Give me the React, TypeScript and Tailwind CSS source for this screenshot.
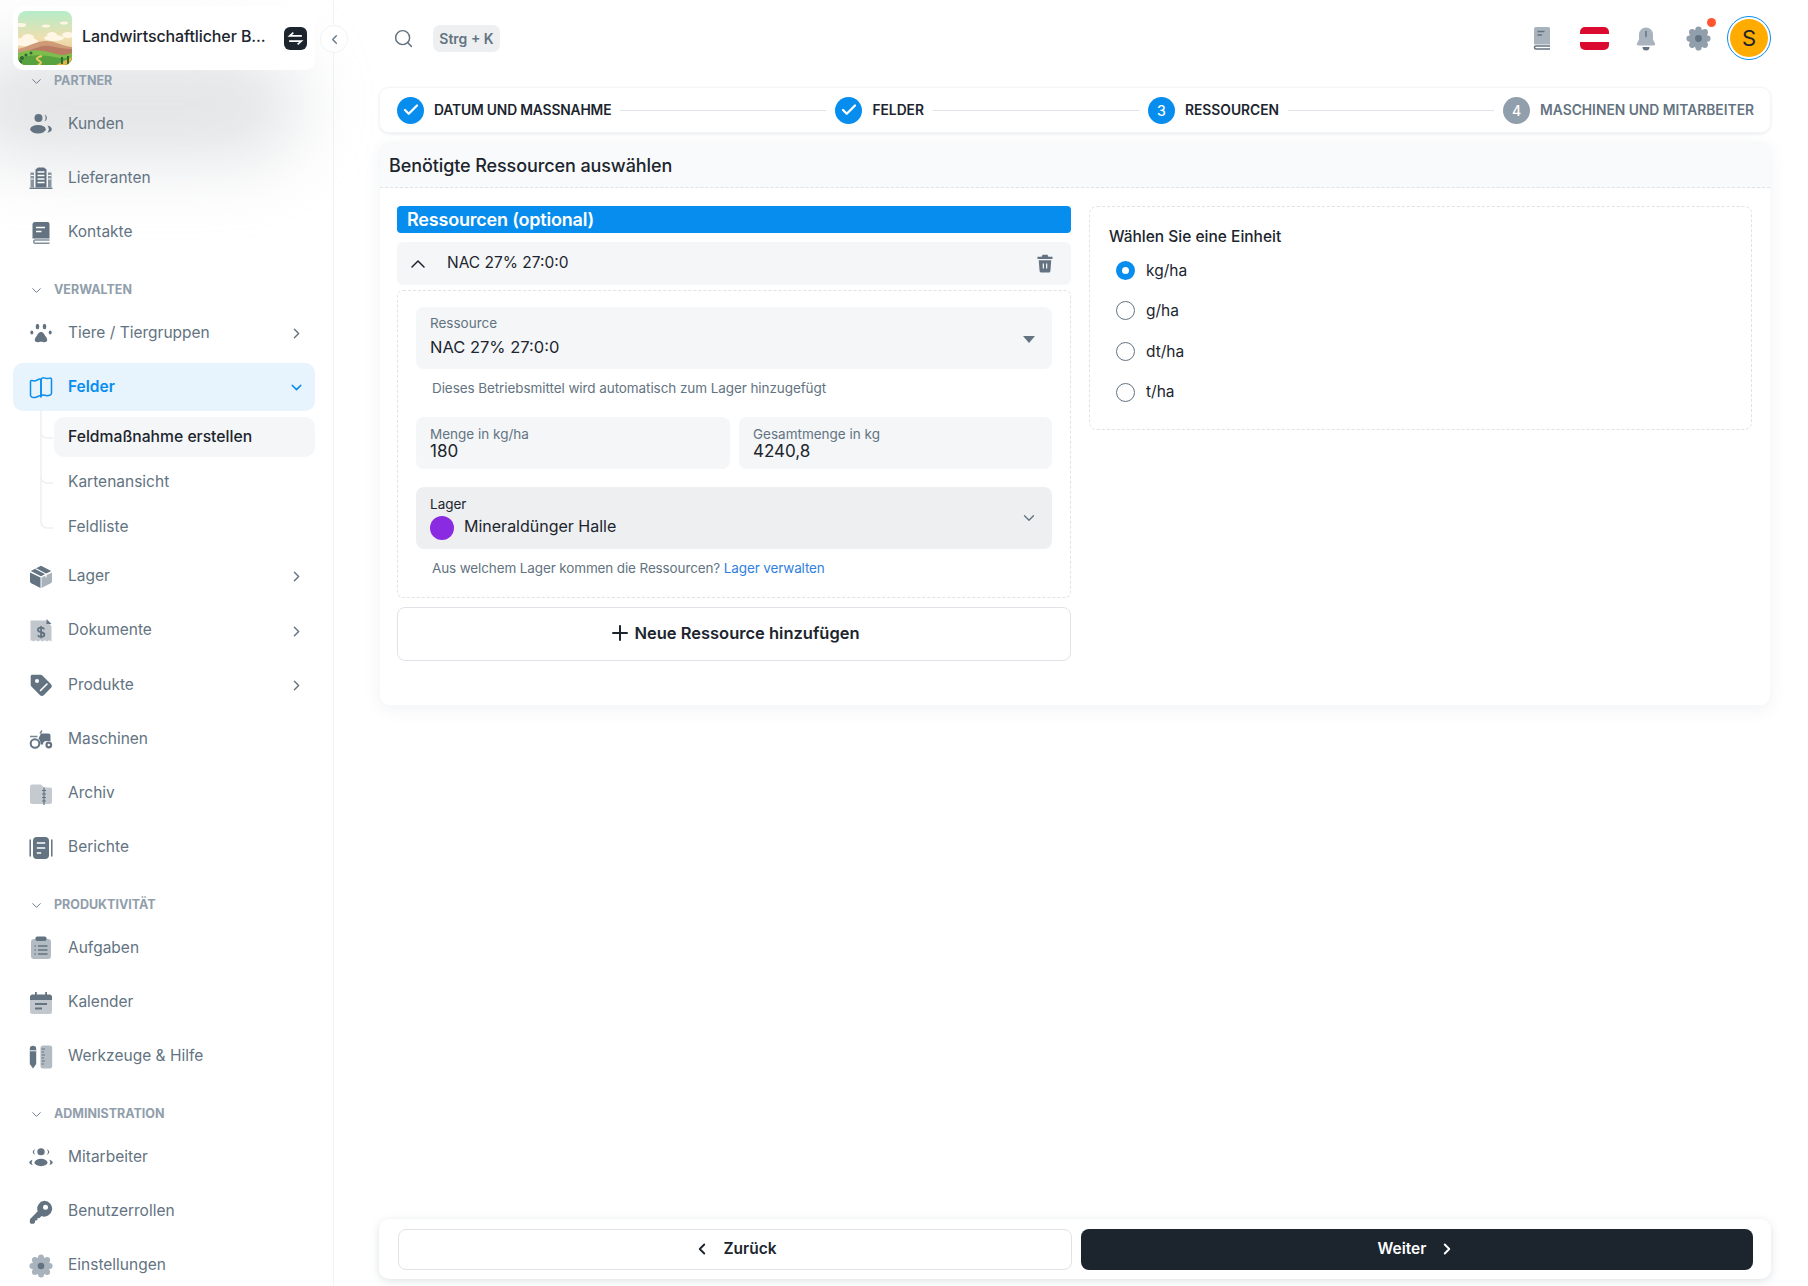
import React from "react";
import { ChevronDown, ChevronRight, ChevronLeft, ChevronUp, Search, Plus, Check } from "lucide-react";

const S = ({ children, className = "w-6 h-6" }: { children: React.ReactNode; className?: string }) => (
  <svg viewBox="0 0 24 24" fill="currentColor" className={className}>{children}</svg>
);

const Users = () => (
  <S>
    <circle cx="9.5" cy="6" r="4" />
    <path d="M15.5 2.6a3.6 3.6 0 0 1 0 6.8 6 6 0 0 0 0-6.8z" />
    <ellipse cx="9" cy="17.2" rx="7.8" ry="4.2" />
    <path d="M18.2 13.6c2.6.5 4.6 1.9 4.6 3.6s-2 3.1-4.6 3.6c1-1 1.6-2.2 1.6-3.6s-.6-2.6-1.6-3.6z" />
  </S>
);
const Building = () => (
  <S>
    <path d="M1.500 6.500h3.500v15H1.500zM19 6.500h3.500v15H19z" opacity="0.75" />
    <path d="M6.500 3.500 9 1.500h6l2.500 2V21.500h-11z" />
    <path d="M8.500 6h7M8.500 9.500h7M8.500 13h7M8.500 16.500h7" stroke="#fff" strokeWidth="1.400" />
    <path d="M.5 22.300h23" stroke="currentColor" strokeWidth="1.300" />
    <path d="M1.800 9.500h3M1.800 13h3M19.200 9.500h3M19.200 13h3" stroke="#fff" strokeWidth="1.100" />
  </S>
);
const BookIcon = () => (
  <S>
    <path d="M3.500 3.500A2.500 2.500 0 0 1 6 1h12.500A2 2 0 0 1 20.500 3v14.500H3.500z" />
    <path d="M7 6.500h9M7 10.500h5.500" stroke="#fff" strokeWidth="1.600" />
    <path d="M20.500 19H6a1.700 1.700 0 0 0 0 3.300h14.500" fill="none" stroke="currentColor" strokeWidth="1.500" opacity="0.8" />
  </S>
);
const Paw = () => (
  <S>
    <path d="M12 11c-2.500 0-3.200 2.400-4.500 4.200-1 1.400-2.200 3-1.600 4.600.6 1.500 2.600 1.600 4.100 1.200 1.300-.3 2.700-.3 4 0 1.500.4 3.500.3 4.100-1.200.6-1.600-.6-3.200-1.600-4.600C15.200 13.400 14.500 11 12 11z" />
    <ellipse cx="8.500" cy="5.500" rx="1.800" ry="2.800" />
    <ellipse cx="15.500" cy="5.500" rx="1.800" ry="2.800" />
    <ellipse cx="2.800" cy="11.500" rx="1.500" ry="2" />
    <ellipse cx="21.200" cy="11.500" rx="1.500" ry="2" />
  </S>
);
const MapI = () => (
  <S>
    <path d="M1.500 6.800c0-1 .8-1.600 1.700-1.300 2 .6 3.700.7 5.400-.6 1.100-.8 2.300-1.500 3.400-.5v16.700c-1.100-1-2.300-.3-3.400.5-1.700 1.300-3.400 1.200-5.400.6-.9-.3-1.700-.9-1.700-1.900z" fill="none" stroke="currentColor" strokeWidth="1.500" />
    <path d="M22.500 4.400c0-1-.8-1.600-1.700-1.300-1.800.6-3.400.6-5 0-1.300-.5-2.700-.5-3.800 1.300v16.700c1.100-1.300 2.500-1.400 3.800-.9 1.600.6 3.200.6 5 0 .9-.3 1.700-.9 1.700-1.900z" fill="none" stroke="currentColor" strokeWidth="1.500" />
  </S>
);
const BoxI = () => (
  <S>
    <path d="M1 7.500 11.500 12.500V23L2.300 18.300A2.400 2.400 0 0 1 1 16.200z" />
    <path d="M23 7.500 12.500 12.500V23l9.200-4.700a2.400 2.400 0 0 0 1.300-2.100z" opacity="0.55" />
    <path d="M12 .8 1.800 6 12 11.200 22.200 6z" />
    <path d="M6.500 3.500 17 9v3.500" fill="none" stroke="#fff" strokeWidth="1.100" />
  </S>
);
const Bill = () => (
  <S>
    <path d="M1.500 1.500H17l5.500 5.500v15.500l-2.300-1.300-2.200 1.300-2.200-1.300-2.300 1.300-2.200-1.300-2.300 1.300-2.200-1.300-2.200 1.300-2.100-1.300-1 .8z" opacity="0.4" />
    <path d="M17.500 0 22.500 5H17.500z" />
    <path d="M15.300 10.300c-.5-1-1.700-1.600-3.200-1.600-1.800 0-3.200.9-3.200 2.300 0 3 6.500 1.500 6.500 4.500 0 1.400-1.400 2.300-3.300 2.300-1.500 0-2.700-.6-3.200-1.700M12.100 7v12.200" fill="none" stroke="currentColor" strokeWidth="1.800" />
  </S>
);
const Tag = () => (
  <S>
    <path d="M2.700 1.800h8.800a3 3 0 0 1 2.100.9l8.200 8.200a3 3 0 0 1 0 4.200l-6.800 6.800a3 3 0 0 1-4.200 0l-8.200-8.200a3 3 0 0 1-.9-2.100V3.500a1.700 1.700 0 0 1 1-1.700z" />
    <circle cx="8" cy="8" r="2" fill="#fff" />
    <path d="M11.500 17.500 18 11" stroke="#fff" strokeWidth="1.600" strokeLinecap="round" />
  </S>
);
const Tractor = () => (
  <S>
    <circle cx="6" cy="16.500" r="4.300" fill="none" stroke="currentColor" strokeWidth="2" />
    <circle cx="19.800" cy="18" r="2.300" fill="none" stroke="currentColor" strokeWidth="2.200" />
    <path d="M12 6.500h7.500a2 2 0 0 1 2 2V14h-4a3.500 3.500 0 0 0-3.500 3.500h-2.500c.2-2.500-.5-4.500-2-6z" />
    <path d="M1 9.500h7.500M11 6.500l2-3" stroke="currentColor" strokeWidth="1.500" fill="none" opacity="0.85" />
  </S>
);
const Folder = () => (
  <S>
    <path d="M1 4.500A2 2 0 0 1 3 2.500h9l3 3h6.500a1.500 1.500 0 0 1 1.500 1.500v13a2 2 0 0 1-2 2H3a2 2 0 0 1-2-2z" opacity="0.38" />
    <path d="M15 5.500V23" stroke="currentColor" strokeWidth="1.200" />
    <path d="M13 8.500h4M13 12h4M13 15.500h4M13 19h4" stroke="currentColor" strokeWidth="1.200" />
  </S>
);
const Report = () => (
  <S>
    <rect x="4" y="1" width="16" height="22" rx="4" />
    <path d="M7.800 7h8.400M7.800 12h8.400M7.800 17h4.400" stroke="#fff" strokeWidth="1.700" />
    <path d="M1.200 4v16M22.800 4v16" stroke="currentColor" strokeWidth="1.500" strokeLinecap="round" />
  </S>
);
const Clip = () => (
  <S>
    <rect x="2" y="3" width="20" height="20" rx="3" opacity="0.48" />
    <rect x="6.500" y=".5" width="11" height="4.500" rx="1.700" />
    <path d="M5.500 10h1.200M5.500 14h1.200M5.500 18h1.200M9 10h9.500M9 14h9.500M9 18h9.500" stroke="currentColor" strokeWidth="1.500" />
  </S>
);
const Cal = () => (
  <S>
    <path d="M1 9h22v11.500a2.500 2.500 0 0 1-2.500 2.500h-17A2.500 2.500 0 0 1 1 20.500z" opacity="0.4" />
    <path d="M1 6a2.500 2.500 0 0 1 2.500-2.500H6V1h1.800v2.500h8.400V1H18v2.500h2.500A2.500 2.500 0 0 1 23 6v3H1z" />
    <path d="M6 13h12M6 17.500h7" stroke="currentColor" strokeWidth="1.900" />
  </S>
);
const Tools = () => (
  <S>
    <path d="M.8 4a3.200 3.200 0 0 1 6.400 0v15L4 23.500.8 19z" />
    <path d="M.8 5.800h6.400" stroke="#fff" strokeWidth=".9" />
    <rect x="11.500" y=".5" width="11.700" height="23" rx="2.500" opacity="0.48" />
    <path d="M12.500 4h3.500M12.500 7h2.500M12.500 10h3.500M12.500 13h2.500M12.500 16h3.500M12.500 19h2.500" stroke="currentColor" strokeWidth="1.100" />
  </S>
);
const Group = () => (
  <S>
    <ellipse cx="12" cy="5.800" rx="3.700" ry="3.500" />
    <ellipse cx="12" cy="16.500" rx="6.500" ry="3.700" />
    <path d="M6.300 3.300C4.500 3.800 3.800 5 3.800 6s.7 2.200 2.500 2.700C5.500 7.800 5 7 5 6s.5-1.800 1.300-2.700zM17.700 3.300c1.800.5 2.500 1.700 2.500 2.700s-.7 2.200-2.500 2.700c.8-.9 1.300-1.700 1.300-2.700s-.5-1.800-1.300-2.700zM3.700 13.800C1.500 14.500.3 15.500.3 16.500s1.200 2 3.400 2.700c-.7-.9-1-1.800-1-2.700s.3-1.800 1-2.700zM20.300 13.800c2.200.7 3.400 1.700 3.400 2.700s-1.200 2-3.400 2.700c.7-.9 1-1.800 1-2.700s-.3-1.800-1-2.700z" />
  </S>
);
const Key = () => (
  <S>
    <path d="M15.300.8a7.900 7.900 0 1 1-2.800 15.300l-2.200 2.200-1.700-.3-.3 2.300-2.200.3-.2 1.900a1.500 1.500 0 0 1-1.400 1.200H2.200A1.500 1.500 0 0 1 .8 22.200l.1-2.300c0-.5.2-.8.5-1.100l7.300-7.500A7.900 7.900 0 0 1 15.300.8z" />
    <circle cx="16.500" cy="7.200" r="2.500" fill="#fff" />
  </S>
);
const Gear = ({ c = "#a9b3bd", d = "#637381", className = "w-6 h-6" }: { c?: string; d?: string; className?: string }) => (
  <svg viewBox="0 0 24 24" className={className}>
    <g fill={c}>
      <circle cx="12" cy="12" r="9" />
      <circle cx="12" cy="3.400" r="3" />
      <circle cx="12" cy="20.600" r="3" />
      <circle cx="3.400" cy="12" r="3" />
      <circle cx="20.600" cy="12" r="3" />
      <circle cx="5.900" cy="5.900" r="3" />
      <circle cx="18.100" cy="5.900" r="3" />
      <circle cx="5.900" cy="18.100" r="3" />
      <circle cx="18.100" cy="18.100" r="3" />
    </g>
    <circle cx="12" cy="12" r="3.300" fill={d} />
  </svg>
);

const Row = ({ icon, label, arrow }: { icon: React.ReactNode; label: string; arrow?: boolean }) => (
  <div className="h-[48px] flex items-center pl-[29px] pr-[28px] text-[#637381] text-[15.500px] font-normal">
    <span className="w-[24px] h-[24px] shrink-0">{icon}</span>
    <span className="ml-[15px] mt-[-2px] flex-1">{label}</span>
    {arrow && <ChevronRight className="w-[17px] h-[17px]" strokeWidth={2} />}
  </div>
);

const Group2 = ({ label, children }: { label: string; children: React.ReactNode }) => (
  <div className="flex flex-col gap-[6.200px]">
    <div className="h-[26px] flex items-center pl-[28.500px] text-[12.500px] font-bold text-[#919eab] leading-none">
      <ChevronDown className="w-[15px] h-[15px] text-[#637381]" strokeWidth={1.500} />
      <span className="ml-[10.500px]">{label}</span>
    </div>
    {children}
  </div>
);

const Logo = () => (
  <svg viewBox="0 0 54 54" className="w-[54px] h-[54px] rounded-[8px]">
    <defs>
      <linearGradient id="sky" x1="0" y1="0" x2="0" y2="1">
        <stop offset="0" stopColor="#b4ecc8" />
        <stop offset="0.5" stopColor="#eedfb0" />
        <stop offset="1" stopColor="#f0bd90" />
      </linearGradient>
    </defs>
    <rect width="54" height="54" fill="url(#sky)" />
    <g fill="#fff6e6">
      <ellipse cx="8" cy="31" rx="12" ry="4.500" />
      <ellipse cx="10" cy="27" rx="6" ry="4" />
      <ellipse cx="36" cy="27" rx="10" ry="3" />
      <ellipse cx="34" cy="24" rx="5" ry="3" />
      <ellipse cx="50" cy="24" rx="6" ry="3" />
      <ellipse cx="3" cy="14" rx="5" ry="2" />
      <ellipse cx="28" cy="15" rx="4" ry="1.500" />
      <ellipse cx="46" cy="12" rx="4" ry="1.500" />
    </g>
    <path d="M0 38C10 36 18 30 28 30S44 35 54 36V54H0z" fill="#cf9a78" />
    <path d="M10 40C20 36 26 34 32 35S46 38 54 38V50H10z" fill="#b97c62" />
    <path d="M0 42C12 38 24 39 34 42S48 44 54 42V54H0z" fill="#7dbd4c" />
    <path d="M0 47C14 43 26 44 36 46S50 47 54 46V54H0z" fill="#57a23e" />
    <path d="M20 54C30 50 10 49 24 45" stroke="#ecc95e" strokeWidth="2" fill="none" />
    <path d="M38 54 54 46V54z" fill="#e3b548" />
    <g fill="#2f6a36">
      <circle cx="4" cy="47" r="2" />
      <circle cx="8" cy="44" r="1.600" />
      <circle cx="13" cy="42" r="1.500" />
      <circle cx="2" cy="51" r="2" />
      <rect x="43" y="46" width="2" height="7" />
      <rect x="49" y="45" width="2" height="8" />
    </g>
  </svg>
);

const Field = ({ label, value, className = "" }: { label: string; value: string; className?: string }) => (
  <div className={`h-[52px] rounded-[8px] bg-[#f4f6f8] px-[14px] pt-[8px] ${className}`}>
    <div className="text-[13.500px] leading-[18px] text-[#637381]">{label}</div>
    <div className="text-[17px] leading-[17px] text-[#1c252e]">{value}</div>
  </div>
);

const Radio = ({ label, on }: { label: string; on?: boolean }) => (
  <div className="h-[40.600px] flex items-center pl-[7px] text-[15.500px] text-[#1c252e]">
    {on ? (
      <span className="w-[19px] h-[19px] rounded-full border-[6px] border-[#078dee] bg-white" />
    ) : (
      <span className="w-[19px] h-[19px] rounded-full border-[1.500px] border-[#637381] bg-white" />
    )}
    <span className="ml-[11px]">{label}</span>
  </div>
);

const Step = ({ n, label, state, tight }: { n: number; label: string; state: "done" | "active" | "todo"; tight?: boolean }) => (
  <div className="flex items-center shrink-0">
    <span
      className={`w-[27px] h-[27px] rounded-full flex items-center justify-center text-white text-[14px] font-medium ${
        state === "todo" ? "bg-[#919eab]" : "bg-[#078dee]"
      }`}
    >
      {state === "done" ? <Check className="w-[18px] h-[18px]" strokeWidth={3} /> : n}
    </span>
    <span
      className={`ml-[10px] text-[13.800px] font-semibold ${tight ? "tracking-[-0.15px]" : ""} ${
        state === "todo" ? "text-[#637381]" : "text-[#1c252e]"
      }`}
    >
      {label}
    </span>
  </div>
);
const Line = () => <div className="flex-1 h-px bg-[#dfe3e8] mx-[9px]" />;

export default function App() {
  return (
    <div className="w-[1808px] h-[1286px] flex bg-white overflow-hidden font-['Inter','Liberation_Sans',sans-serif] text-[#1c252e]">
      {/* Sidebar */}
      <aside className="relative w-[334px] h-[1286px] shrink-0 border-r border-[#f1f3f5] bg-white">
        <div className="absolute left-[-40px] top-[50px] w-[340px] h-[110px] rounded-full bg-[#c4c8cc] blur-[36px] opacity-50" />
        <div className="relative h-[1286px] overflow-hidden pt-[68px] flex flex-col gap-[20.500px]">
          <Group2 label="PARTNER">
            <Row icon={<Users />} label="Kunden" />
            <Row icon={<Building />} label="Lieferanten" />
            <Row icon={<BookIcon />} label="Kontakte" />
          </Group2>
          <Group2 label="VERWALTEN">
            <Row icon={<Paw />} label="Tiere / Tiergruppen" arrow />
            <div className="ml-[13px] mr-[18px]">
              <div className="h-[48px] flex items-center pl-[16px] pr-[10.500px] rounded-[10px] bg-[#e7f3fd] text-[#078dee] text-[15.500px] font-semibold">
                <span className="w-[24px] h-[24px] shrink-0"><MapI /></span>
                <span className="ml-[15px] mt-[-2px] flex-1">Felder</span>
                <ChevronDown className="w-[17px] h-[17px]" strokeWidth={2} />
              </div>
            </div>
            <div className="relative -mt-[1px] ml-[54px] mr-[18px] flex flex-col gap-[5px]">
              <svg className="absolute left-[-15px] top-[-7px] w-[16px] h-[130px]" viewBox="0 0 16 130" fill="none">
                <path d="M2 0V112a6 6 0 0 0 6 6h6M2 22a6 6 0 0 0 6 6h6M2 67a6 6 0 0 0 6 6h6" stroke="#edeff1" strokeWidth="1.500" />
              </svg>
              <div className="h-[40px] pl-[14px] flex items-center rounded-[10px] bg-[#f4f6f8] text-[15.700px] font-medium text-[#1c252e]">Feldmaßnahme erstellen</div>
              <div className="h-[40px] pl-[14px] flex items-center text-[15.500px] text-[#637381]">Kartenansicht</div>
              <div className="h-[40px] pl-[14px] flex items-center text-[15.500px] text-[#637381]">Feldliste</div>
            </div>
            <Row icon={<BoxI />} label="Lager" arrow />
            <Row icon={<Bill />} label="Dokumente" arrow />
            <Row icon={<Tag />} label="Produkte" arrow />
            <Row icon={<Tractor />} label="Maschinen" />
            <Row icon={<Folder />} label="Archiv" />
            <Row icon={<Report />} label="Berichte" />
          </Group2>
          <Group2 label="PRODUKTIVITÄT">
            <Row icon={<Clip />} label="Aufgaben" />
            <Row icon={<Cal />} label="Kalender" />
            <Row icon={<Tools />} label="Werkzeuge & Hilfe" />
          </Group2>
          <Group2 label="ADMINISTRATION">
            <Row icon={<Group />} label="Mitarbeiter" />
            <Row icon={<Key />} label="Benutzerrollen" />
            <Row icon={<Gear />} label="Einstellungen" />
          </Group2>
        </div>
        {/* Sticky workspace header */}
        <div className="absolute left-[13px] top-[6px] w-[302px] h-[64px] rounded-[10px] bg-white flex items-center pl-[5px] pr-[8px]">
          <Logo />
          <span className="ml-[10px] mt-[-4px] flex-1 text-[16px] font-medium tracking-[-0.1px] text-[#1c252e] whitespace-nowrap">Landwirtschaftlicher B...</span>
          <span className="w-[23px] h-[23px] rounded-[6px] bg-[#1c252e] flex items-center justify-center">
            <svg viewBox="0 0 16 16" className="w-[17px] h-[17px]" fill="none" stroke="#fff" strokeWidth="1.500">
              <path d="M14 5.500H2.500L6 2.500M2 10.500h11.500L10 13.500" />
            </svg>
          </span>
        </div>
        <div className="absolute left-[320px] top-[25px] w-[28px] h-[28px] rounded-full bg-white border border-[#f1f3f5] flex items-center justify-center text-[#637381]">
          <ChevronLeft className="w-[15px] h-[15px]" strokeWidth={2} />
        </div>
      </aside>

      {/* Main */}
      <main className="flex-1 min-w-0 h-[1286px] pl-[45px] pr-[37px] flex flex-col">
        <header className="h-[87px] shrink-0 pb-[11px] flex items-center">
          <Search className="ml-[14px] w-[21px] h-[21px] text-[#637381]" strokeWidth={1.700} />
          <span className="ml-[19px] w-[67px] h-[27px] rounded-[7px] bg-[#edeff1] flex items-center justify-center text-[14px] font-semibold text-[#637381] whitespace-nowrap">Strg + K</span>
          <div className="ml-auto flex items-center gap-[12px]">
            <span className="w-[40px] flex justify-center text-[#a9b3bd]">
              <svg viewBox="0 0 24 24" className="w-[24px] h-[26px]" fill="currentColor">
                <path d="M4 3a2 2 0 0 1 2-2h12.500a1.500 1.500 0 0 1 1.500 1.500v16H4z" />
                <path d="M7.500 5.500h7M7.500 9h4.500" stroke="#637381" strokeWidth="1.500" />
                <path d="M20 20H6a1.500 1.500 0 0 0 0 3h14" stroke="#637381" strokeWidth="1.500" fill="none" />
              </svg>
            </span>
            <span className="w-[40px] flex justify-center">
              <span className="w-[29px] h-[23px] rounded-[5px] overflow-hidden flex flex-col">
                <span className="flex-1 bg-[#db0a2f]" />
                <span className="flex-1 bg-white" />
                <span className="flex-1 bg-[#db0a2f]" />
              </span>
            </span>
            <span className="w-[40px] flex justify-center text-[#a9b3bd]">
              <svg viewBox="0 0 24 24" className="w-[24px] h-[25px]" fill="currentColor">
                <path d="M12 1a7 7 0 0 1 7 7v5l2 4a1.500 1.500 0 0 1-1.400 2H4.400A1.500 1.500 0 0 1 3 17l2-4V8a7 7 0 0 1 7-7z" />
                <path d="M12 5v5" stroke="#637381" strokeWidth="1.500" strokeLinecap="round" />
                <path d="M8.500 20.500h7a3.500 3.500 0 0 1-7 0z" fill="#637381" />
              </svg>
            </span>
            <span className="relative w-[40px] flex justify-center">
              <Gear c="#919eab" className="w-[25px] h-[25px]" />
              <span className="absolute left-[29px] top-[-8px] w-[9px] h-[9px] rounded-full bg-[#ff5630]" />
            </span>
            <span className="ml-[-3px] w-[44px] h-[44px] rounded-full border border-[#078dee] p-[2px]">
              <span className="w-full h-full rounded-full bg-[#ffab00] flex items-center justify-center text-[22px] text-[#1c252e]">S</span>
            </span>
          </div>
        </header>

        <section className="h-[46px] shrink-0 rounded-[10px] bg-white border border-[#f4f6f8] shadow-[0_1px_3px_rgba(145,158,171,0.2)] pl-[17px] pr-[16px] flex items-center">
          <Step n={1} label="DATUM UND MASSNAHME" state="done" tight />
          <Line />
          <Step n={2} label="FELDER" state="done" />
          <Line />
          <Step n={3} label="RESSOURCEN" state="active" />
          <Line />
          <Step n={4} label="MASCHINEN UND MITARBEITER" state="todo" />
        </section>

        <section className="mt-[9px] h-[564px] shrink-0 rounded-[10px] bg-white shadow-[0_4px_16px_rgba(145,158,171,0.12)] border border-[#f7f8f9]">
          <div className="h-[45px] rounded-t-[10px] bg-[#f9fafb] border-b border-dashed border-[#dfe3e8] pl-[9px] flex items-center text-[18px] font-medium tracking-[-0.1px] text-[#1c252e]">
            Benötigte Ressourcen auswählen
          </div>
          <div className="pl-[17px] pr-[18px] pt-[18px] grid grid-cols-[674px_1fr] gap-[18px]">
            <div className="flex flex-col">
              <div className="h-[27px] rounded-[4px] bg-[#078dee] pl-[10px] flex items-center text-white text-[18px] font-semibold tracking-[-0.2px]">Ressourcen (optional)</div>
              <div className="mt-[9px] h-[43px] rounded-[6px] bg-[#f4f6f8] flex items-center pl-[9px] pr-[16px]">
                <ChevronUp className="w-[24px] h-[24px] text-[#1c252e]" strokeWidth={1.500} />
                <span className="ml-[17px] mt-[-2px] flex-1 text-[15.500px] text-[#1c252e]">NAC 27% 27:0:0</span>
                <svg viewBox="0 0 24 24" className="w-[20px] h-[21px] text-[#637381]" fill="currentColor">
                  <path d="M9 1.500h6l1 2.500h5v2.500H3V4h5z" />
                  <path d="M4.500 8h15l-1 13a2 2 0 0 1-2 1.800h-9a2 2 0 0 1-2-1.800z" />
                  <path d="M10 12v6M14 12v6" stroke="#fff" strokeWidth="1.400" />
                </svg>
              </div>
              <div className="mt-[5px] h-[308px] rounded-[6px] border border-dashed border-[#dfe3e8] px-[18px] pt-[16px]">
                <div className="h-[62px] rounded-[8px] bg-[#f4f6f8] pl-[14px] pr-[17px] flex items-center justify-between">
                  <div className="flex flex-col mt-[-3px]">
                    <span className="text-[13.500px] leading-[17px] text-[#637381]">Ressource</span>
                    <span className="mt-[4px] text-[16.500px] leading-[22px] text-[#1c252e]">NAC 27% 27:0:0</span>
                  </div>
                  <span className="mt-[2px] w-0 h-0 border-l-[6px] border-r-[6px] border-t-[7px] border-l-transparent border-r-transparent border-t-[#637381]" />
                </div>
                <p className="mt-[10px] h-[18px] pl-[16px] text-[13.500px] leading-[18px] text-[#637381] tracking-[-0.08px]">Dieses Betriebsmittel wird automatisch zum Lager hinzugefügt</p>
                <div className="mt-[20px] grid grid-cols-[314px_1fr] gap-[9px]">
                  <Field label="Menge in kg/ha" value="180" />
                  <Field label="Gesamtmenge in kg" value="4240,8" />
                </div>
                <div className="mt-[18px] h-[62px] rounded-[8px] bg-[#edeff1] pl-[14px] pr-[14px] flex items-center justify-between">
                  <div className="flex flex-col mt-[-1px]">
                    <span className="text-[13.500px] leading-[17px] text-[#1c252e]">Lager</span>
                    <span className="mt-[3px] flex items-center">
                      <span className="w-[24px] h-[24px] rounded-full bg-[#8a2be2]" />
                      <span className="ml-[10px] text-[16px] text-[#1c252e] mt-[-3px]">Mineraldünger Halle</span>
                    </span>
                  </div>
                  <ChevronDown className="w-[18px] h-[18px] text-[#637381]" strokeWidth={1.800} />
                </div>
                <p className="mt-[10px] h-[18px] pl-[16px] text-[13.500px] leading-[18px] text-[#637381] tracking-[-0.13px]">
                  Aus welchem Lager kommen die Ressourcen? <span className="text-[#2f7fe0]">Lager verwalten</span>
                </p>
              </div>
              <div className="mt-[9px] h-[54px] pb-[2px] rounded-[8px] border border-[#dfe3e8] flex items-center justify-center text-[16.500px] font-semibold text-[#1c252e]">
                <Plus className="w-[24px] h-[24px] mr-[2px]" strokeWidth={2} />
                Neue Ressource hinzufügen
              </div>
            </div>
            <div className="h-[224px] rounded-[8px] border border-dashed border-[#dfe3e8] pl-[19px] pt-[20px]">
              <div className="text-[15.500px] font-medium leading-[20px] text-[#1c252e]">Wählen Sie eine Einheit</div>
              <div className="mt-[3px] flex flex-col">
                <Radio label="kg/ha" on />
                <Radio label="g/ha" />
                <Radio label="dt/ha" />
                <Radio label="t/ha" />
              </div>
            </div>
          </div>
        </section>

        <section className="mt-auto mb-[7px] h-[60px] shrink-0 rounded-[10px] bg-white shadow-[0_2px_8px_rgba(145,158,171,0.3)] pl-[19px] pr-[18px] grid grid-cols-[674px_1fr] gap-[9px] items-center">
          <div className="h-[41px] rounded-[8px] border border-[#dfe3e8] flex items-center justify-center text-[15.500px] font-semibold text-[#1c252e]">
            <ChevronLeft className="w-[18px] h-[18px]" strokeWidth={2.500} />
            <span className="ml-[12px]">Zurück</span>
          </div>
          <div className="h-[41px] rounded-[8px] bg-[#1c252e] flex items-center justify-center text-[15.500px] font-semibold text-white">
            <span>Weiter</span>
            <ChevronRight className="ml-[12px] w-[18px] h-[18px]" strokeWidth={2.500} />
          </div>
        </section>
      </main>
    </div>
  );
}
